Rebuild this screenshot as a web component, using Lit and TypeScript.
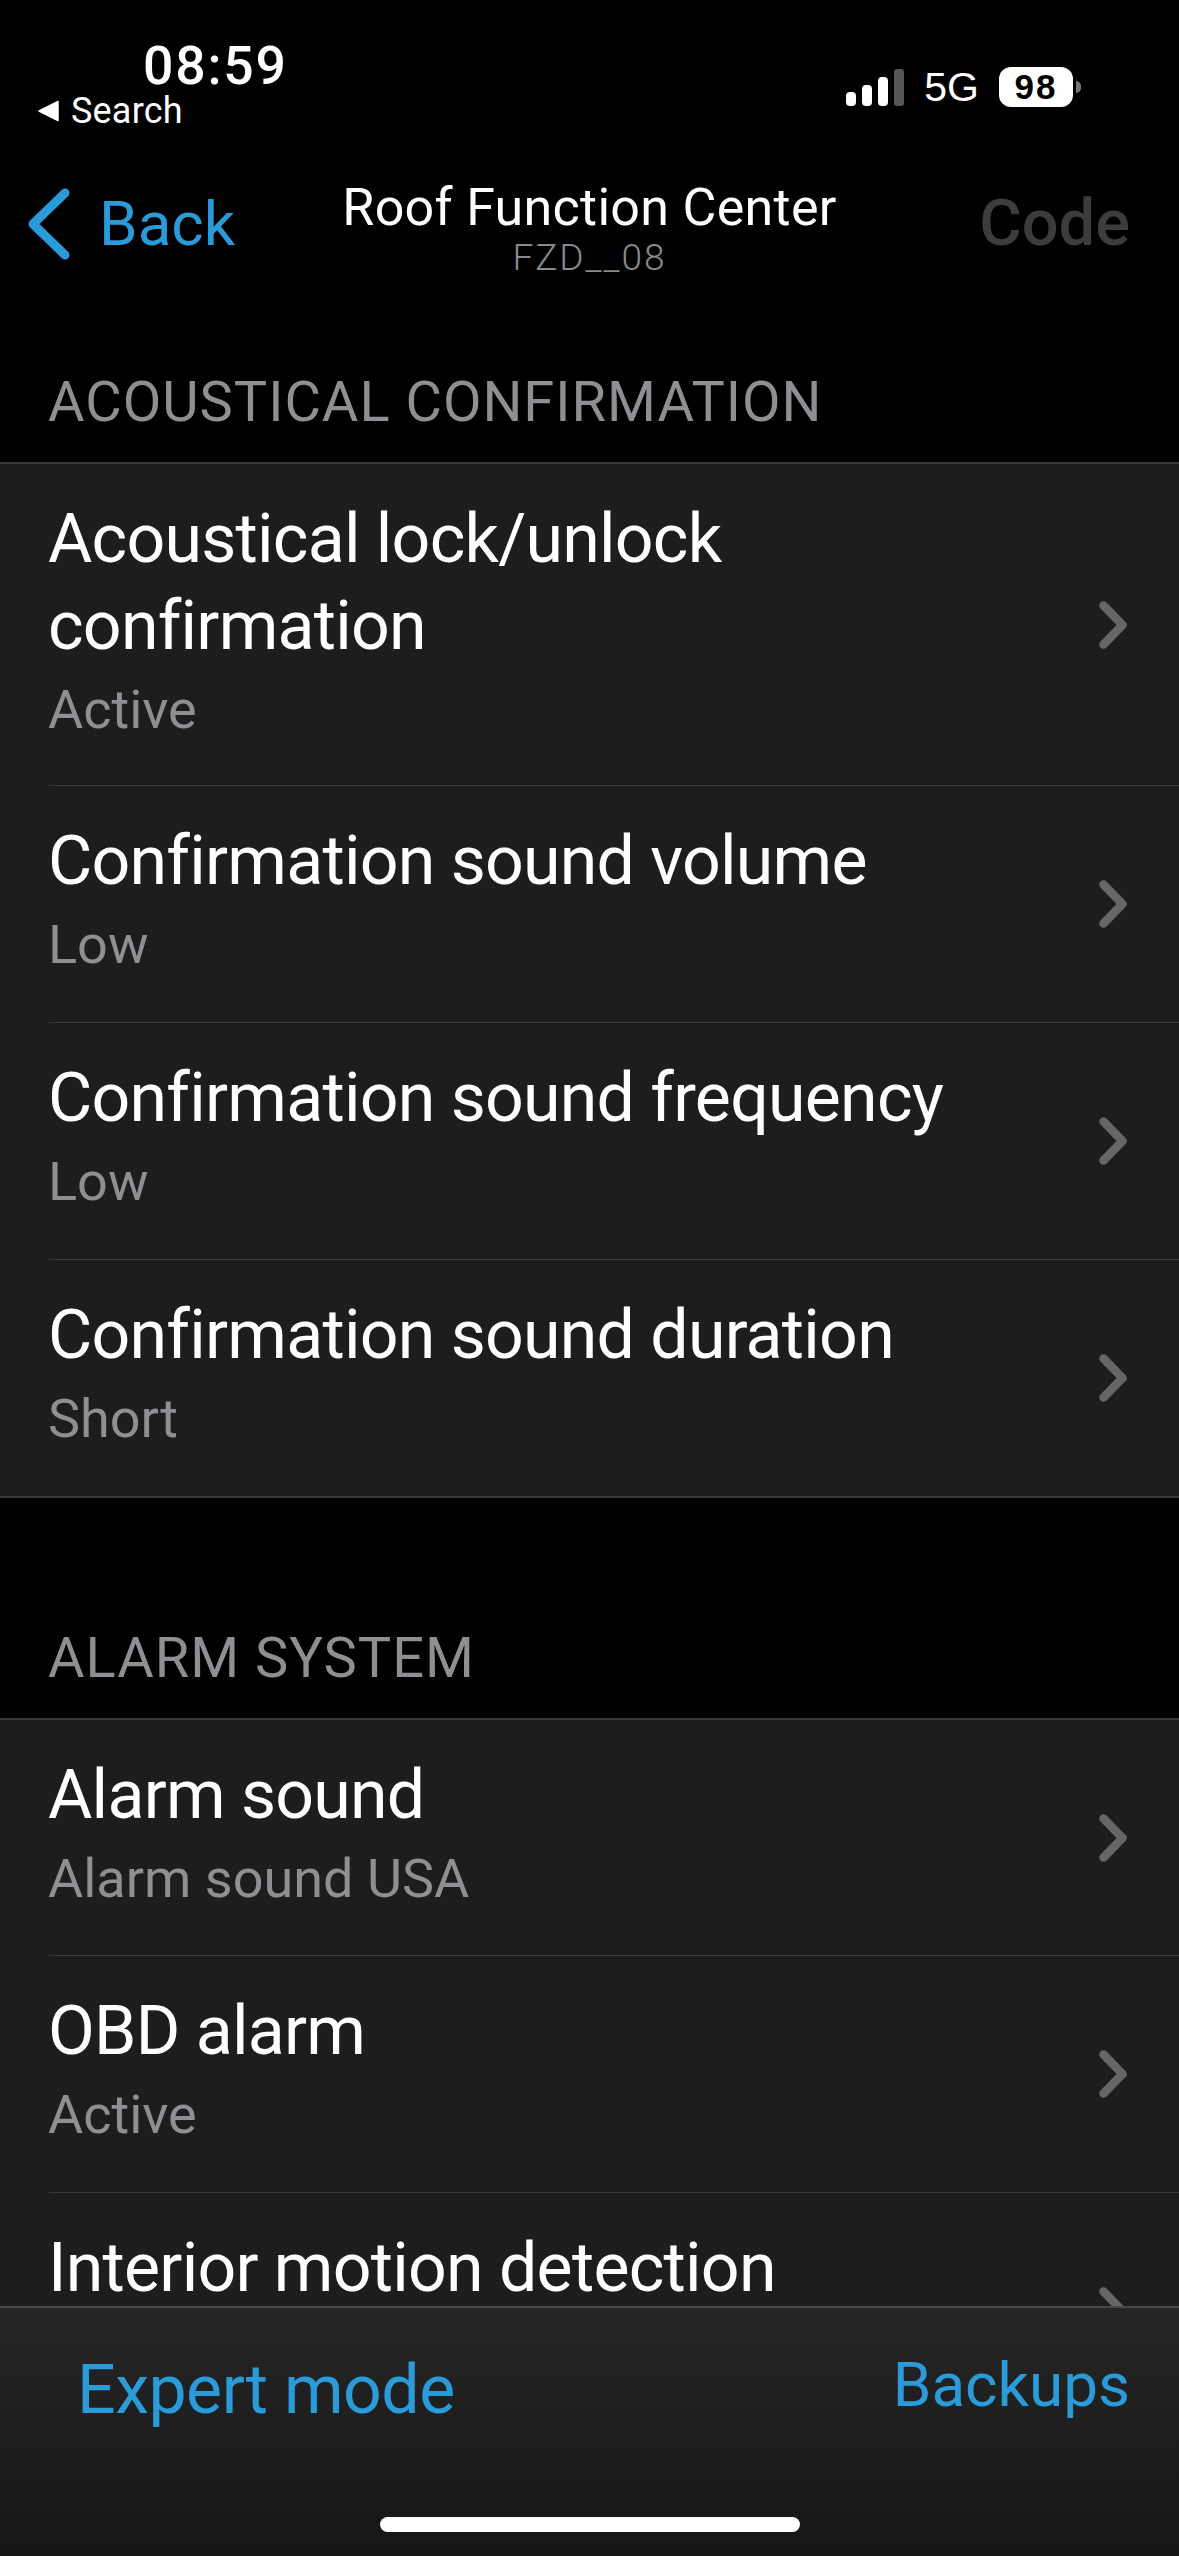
import { LitElement, html, css, svg } from "lit";
import { customElement } from "lit/decorators.js";

const chevron = html`<svg class="chev" viewBox="0 0 28 48" width="28" height="48">${svg`<path d="M4.5 4.5 L23.5 24 L4.5 43.5" fill="none" stroke="#666" stroke-width="8.5" stroke-linecap="round" stroke-linejoin="round"/>`}</svg>`;

interface Row { t: string; s?: string }
const group1: Row[] = [
  { t: "Acoustical lock/unlock confirmation", s: "Active" },
  { t: "Confirmation sound volume", s: "Low" },
  { t: "Confirmation sound frequency", s: "Low" },
  { t: "Confirmation sound duration", s: "Short" },
];
const group2: Row[] = [
  { t: "Alarm sound", s: "Alarm sound USA" },
  { t: "OBD alarm", s: "Active" },
  { t: "Interior motion detection" },
];

@customElement("app-root")
export class AppRoot extends LitElement {
  static styles = css`
    :host { display: block; width: 1179px; height: 2556px; background: #000; color: #fff; font-family: Roboto, "Liberation Sans", sans-serif; overflow: hidden; }
    .page { height: 2556px; display: flex; flex-direction: column; }
    .status { height: 140px; flex: none; display: flex; justify-content: space-between; box-sizing: border-box; padding: 40px 0 0 38px; }
    .left { display: flex; flex-direction: column; }
    .time { font-size: 53.5px; font-weight: 500; line-height: 52px; margin-left: 105px; letter-spacing: 1.8px; }
    .search { display: flex; align-items: center; gap: 12px; font-size: 36px; font-weight: 400; line-height: 38px; letter-spacing: 0.2px; }
    .right { display: flex; align-items: center; height: 40px; margin: 27px 98px 0 0; }
    .sig { margin-right: 20px; }
    .net { font-family: "Liberation Sans", sans-serif; font-size: 41px; margin-right: 20px; }
    .batt { width: 74px; height: 40px; background: #fff; border-radius: 12px; color: #000; font-family: "Liberation Sans", sans-serif; font-weight: 700; font-size: 35px; display: flex; align-items: center; justify-content: center; letter-spacing: 2px; }
    .nub { width: 5px; height: 12px; background: #777; border-radius: 0 6px 6px 0; margin-left: 3px; }
    .nav { height: 130px; flex: none; display: grid; grid-template-columns: 1fr auto 1fr; align-items: start; box-sizing: border-box; padding: 0 49px; }
    .back { display: flex; align-items: center; gap: 29px; color: #2a9ad9; font-size: 62px; line-height: 70px; margin: 48px 0 0 -21px; }
    .center { text-align: center; padding-top: 43px; }
    .title { font-size: 52px; font-weight: 400; line-height: 50px; letter-spacing: 0.3px; }
    .sub { font-size: 37px; color: #8a8a8e; line-height: 40px; margin-top: 5px; letter-spacing: 2px; font-weight: 300; }
    .code { justify-self: end; font-size: 65px; font-weight: 500; color: #3c3c3c; line-height: 70px; margin-top: 48px; }
    .scroll { flex: 1; min-height: 0; overflow: hidden; }
    .hdr { font-size: 56px; font-weight: 400; color: #8e8e93; box-sizing: border-box; padding: 0 49px 29px 48px; display: flex; align-items: flex-end; line-height: 62px; letter-spacing: 1px; }
    .hdr.h1 { height: 192px; }
    .hdr.h2 { height: 220px; }
    .group { background: #1d1d1d; border-top: 2px solid #3a3a3c; border-bottom: 2px solid #3a3a3c; }
    .row { display: flex; align-items: center; justify-content: space-between; margin-left: 49px; padding-right: 52px; height: 237px; box-sizing: border-box; border-top: 1px solid #3a3a3c; }
    .row:first-child { border-top: none; height: 235px; }
    .group.g1 .row:first-child { height: 321px; }
    .text { max-width: 950px; align-self: flex-start; padding-top: 32px; margin-left: -1px; }
    .group.g1 .row:first-child .text { max-width: 860px; }
    .t { font-size: 68px; line-height: 87px; font-weight: 400; letter-spacing: -0.75px; }
    .s { font-size: 54px; line-height: 62px; font-weight: 400; color: #8e8e93; margin-top: 9px; }
    .footer { height: 250px; flex: none; box-sizing: border-box; border-top: 2px solid #48484a; background: linear-gradient(#262626, #161616); display: flex; flex-direction: column; }
    .actions { display: flex; justify-content: space-between; align-items: flex-start; color: #2a9ad9; padding: 42px 49px 0 77px; }
    .exp { font-size: 68px; line-height: 80px; font-weight: 400; letter-spacing: -0.5px; }
    .bk { font-size: 62px; line-height: 70px; font-weight: 400; }
    .home { width: 420px; height: 15px; border-radius: 8px; background: #fff; align-self: center; margin-top: 87px; }
  `;

  private row(r: Row) {
    return html`<div class="row">
      <div class="text"><div class="t">${r.t}</div>${r.s ? html`<div class="s">${r.s}</div>` : ""}</div>
      ${chevron}
    </div>`;
  }

  render() {
    return html`<div class="page">
      <div class="status">
        <div class="left">
          <div class="time">08:59</div>
          <div class="search">
            <svg width="21" height="22" viewBox="0 0 21 22">${svg`<path d="M20 1.5 V20.5 L1 11 Z" fill="#fff" stroke="#fff" stroke-width="1.5" stroke-linejoin="round"/>`}</svg>
            <span>Search</span>
          </div>
        </div>
        <div class="right">
          <svg class="sig" width="58" height="37" viewBox="0 0 58 37">
            ${svg`<rect x="0" y="23" width="10" height="14" rx="4" fill="#fff"/>
            <rect x="16" y="16" width="10" height="21" rx="4" fill="#fff"/>
            <rect x="32" y="8" width="10" height="29" rx="4" fill="#fff"/>
            <rect x="48" y="0" width="10" height="37" rx="3" fill="#555"/>`}
          </svg>
          <span class="net">5G</span>
          <div class="batt">98</div><div class="nub"></div>
        </div>
      </div>
      <div class="nav">
        <div class="back">
          <svg width="42" height="72" viewBox="0 0 42 72">${svg`<path d="M37 5 L5 36 L37 67" fill="none" stroke="#2a9ad9" stroke-width="9" stroke-linecap="round" stroke-linejoin="round"/>`}</svg>
          <span>Back</span>
        </div>
        <div class="center"><div class="title">Roof Function Center</div><div class="sub">FZD__08</div></div>
        <div class="code">Code</div>
      </div>
      <div class="scroll">
        <div class="hdr h1">ACOUSTICAL CONFIRMATION</div>
        <div class="group g1">${group1.map((r) => this.row(r))}</div>
        <div class="hdr h2">ALARM SYSTEM</div>
        <div class="group">${group2.map((r) => this.row(r))}</div>
      </div>
      <div class="footer">
        <div class="actions"><span class="exp">Expert mode</span><span class="bk">Backups</span></div>
        <div class="home"></div>
      </div>
    </div>`;
  }
}
